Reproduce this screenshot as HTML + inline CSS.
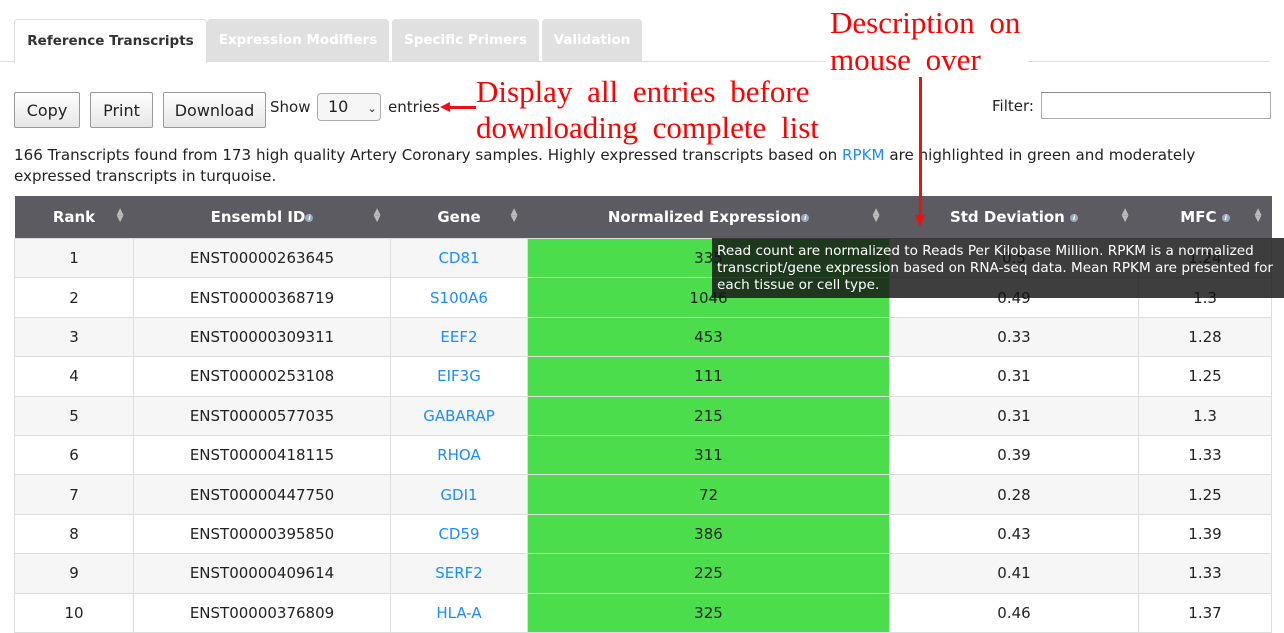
<!DOCTYPE html>
<html><head><meta charset="utf-8"><style>
body{margin:0;width:1284px;height:632px;overflow:hidden;background:#fff;font-family:"DejaVu Sans","Liberation Sans",sans-serif;font-size:15px;color:#222;position:relative}
.abs{position:absolute}
.tab{position:absolute;top:19px;height:42px;line-height:42px;text-align:center;font-weight:bold;font-size:13.5px;color:#fff;background:#e0e0e0;border-radius:4px 4px 0 0}
.btn{position:absolute;top:92px;height:36px;line-height:36px;border:1px solid #999;border-radius:2px;background:linear-gradient(#fff,#e6e6e6);text-align:center;font-size:16px;color:#222;box-sizing:border-box}
.red{position:absolute;color:#f00;font-family:"Liberation Serif",serif;font-size:31px;word-spacing:7px;line-height:36px;white-space:nowrap}
table{position:absolute;left:14px;top:196px;border-collapse:collapse;table-layout:fixed;width:1257px}
th{background:#5b5b61;color:#fff;height:42px;font-size:15px;font-weight:bold;position:relative;padding:0}
th .s{position:absolute;right:10px;top:13px;font-size:9px;line-height:7px;color:#bbb}
td{height:38.4px;border:1px solid #ddd;text-align:center;padding:0;font-size:15px;background:#fff}
tr.o td{background:#f6f6f6}
td.g{background:#4cdd4c!important}
a{color:#1a8cff;text-decoration:none}
i.i{display:inline-block;width:8px;height:8px;border-radius:50%;background:#9ab;font-size:7px;line-height:8px;color:#fff;vertical-align:middle;font-style:italic}
</style></head><body>
<div class="abs" style="left:0;top:61px;width:1270px;border-top:1px solid #ddd"></div>
<div class="tab" style="left:14px;width:191px;background:#fff;color:#333;border:1px solid #ddd;border-bottom:none;height:43px">Reference Transcripts</div>
<div class="tab" style="left:207px;width:182px">Expression Modifiers</div>
<div class="tab" style="left:392px;width:147px">Specific Primers</div>
<div class="tab" style="left:542px;width:100px">Validation</div>
<div class="btn" style="left:14px;width:66px">Copy</div>
<div class="btn" style="left:90px;width:63px">Print</div>
<div class="btn" style="left:163px;width:103px">Download</div>
<div class="abs" style="left:270px;top:98px">Show</div>
<div class="abs" style="left:317px;top:93px;width:64px;height:28px;border:1px solid #aaa;border-radius:4px;background:#f6f6f6;box-sizing:border-box;line-height:26px;padding-left:10px;font-size:16px">10 <span style="font-size:11px;margin-left:14px">&#8964;</span></div>
<div class="abs" style="left:388px;top:98px">entries</div>
<div class="abs" style="left:450px;top:106px;width:26px;height:3px;background:#e11"></div>
<div class="abs" style="left:440px;top:102px;width:0;height:0;border-top:5px solid transparent;border-bottom:5px solid transparent;border-right:10px solid #e11"></div>
<div class="red" style="left:476px;top:74px">Display all entries before</div>
<div class="red" style="left:476px;top:110px">downloading complete list</div>
<div class="abs" style="left:826px;top:40px;width:202px;height:40px;background:#fff"></div>
<div class="red" style="left:830px;top:5px">Description on</div>
<div class="red" style="left:830px;top:42px">mouse over</div>
<div class="abs" style="left:992px;top:97px;font-size:15px">Filter:</div>
<div class="abs" style="left:1041px;top:92px;width:230px;height:27px;border:1px solid #aaa;border-top-color:#888;box-sizing:border-box"></div>
<div class="abs" style="left:14px;top:145px;width:1200px;line-height:21px;font-size:15.1px">166 Transcripts found from 173 high quality Artery Coronary samples. Highly expressed transcripts based on <a>RPKM</a> are highlighted in green and moderately expressed transcripts in turquoise.</div>
<table>
<colgroup><col style="width:119px"><col style="width:257px"><col style="width:137px"><col style="width:362px"><col style="width:249px"><col style="width:133px"></colgroup>
<tr><th>Rank<span class="s">▲<br>▼</span></th><th>Ensembl ID<i class="i">i</i><span class="s">▲<br>▼</span></th><th>Gene<span class="s">▲<br>▼</span></th><th>Normalized Expression<i class="i">i</i><span class="s">▲<br>▼</span></th><th>Std Deviation <i class="i">i</i><span class="s">▲<br>▼</span></th><th>MFC <i class="i">i</i><span class="s">▲<br>▼</span></th></tr>
<tr class="o"><td>1</td><td>ENST00000263645</td><td><a>CD81</a></td><td class="g">335</td><td>0.5</td><td>1.24</td></tr>
<tr><td>2</td><td>ENST00000368719</td><td><a>S100A6</a></td><td class="g">1046</td><td>0.49</td><td>1.3</td></tr>
<tr class="o"><td>3</td><td>ENST00000309311</td><td><a>EEF2</a></td><td class="g">453</td><td>0.33</td><td>1.28</td></tr>
<tr><td>4</td><td>ENST00000253108</td><td><a>EIF3G</a></td><td class="g">111</td><td>0.31</td><td>1.25</td></tr>
<tr class="o"><td>5</td><td>ENST00000577035</td><td><a>GABARAP</a></td><td class="g">215</td><td>0.31</td><td>1.3</td></tr>
<tr><td>6</td><td>ENST00000418115</td><td><a>RHOA</a></td><td class="g">311</td><td>0.39</td><td>1.33</td></tr>
<tr class="o"><td>7</td><td>ENST00000447750</td><td><a>GDI1</a></td><td class="g">72</td><td>0.28</td><td>1.25</td></tr>
<tr><td>8</td><td>ENST00000395850</td><td><a>CD59</a></td><td class="g">386</td><td>0.43</td><td>1.39</td></tr>
<tr class="o"><td>9</td><td>ENST00000409614</td><td><a>SERF2</a></td><td class="g">225</td><td>0.41</td><td>1.33</td></tr>
<tr><td>10</td><td>ENST00000376809</td><td><a>HLA-A</a></td><td class="g">325</td><td>0.46</td><td>1.37</td></tr>
</table>
<div class="abs" style="left:712px;top:238px;width:572px;height:60px;background:rgba(20,20,20,0.82);color:#fff;font-size:13.6px;line-height:17px;padding:5px 0 0 5px;box-sizing:border-box">Read count are normalized to Reads Per Kilobase Million. RPKM is a normalized transcript/gene expression based on RNA-seq data. Mean RPKM are presented for each tissue or cell type.</div>
<div class="abs" style="left:919px;top:77px;width:3px;height:140px;background:#e11"></div>
<div class="abs" style="left:915px;top:215px;width:0;height:0;border-left:5px solid transparent;border-right:5px solid transparent;border-top:12px solid #e11"></div>
</body></html>
